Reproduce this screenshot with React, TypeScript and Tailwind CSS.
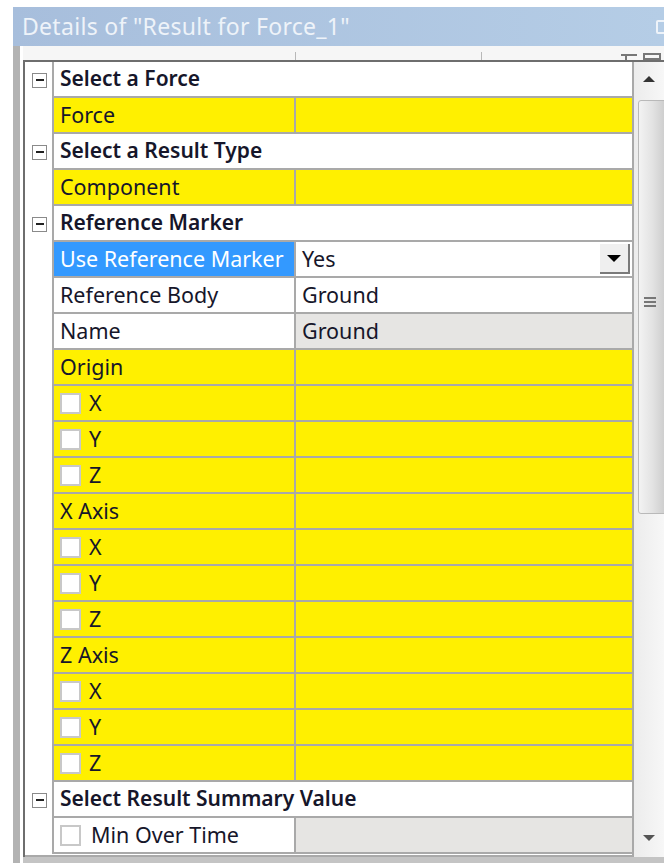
import type { ReactNode } from "react";

type Row =
  | { kind: "cat"; label: string }
  | {
      kind: "prop";
      label: string;
      value?: string;
      tone?: "yellow" | "white" | "selected";
      valueTone?: "yellow" | "white" | "gray";
      check?: boolean;
      dropdown?: boolean;
    };

const rows: Row[] = [
  { kind: "cat", label: "Select a Force" },
  { kind: "prop", label: "Force", tone: "yellow" },
  { kind: "cat", label: "Select a Result Type" },
  { kind: "prop", label: "Component", tone: "yellow" },
  { kind: "cat", label: "Reference Marker" },
  { kind: "prop", label: "Use Reference Marker", value: "Yes", tone: "selected", valueTone: "white", dropdown: true },
  { kind: "prop", label: "Reference Body", value: "Ground", tone: "white", valueTone: "white" },
  { kind: "prop", label: "Name", value: "Ground", tone: "white", valueTone: "gray" },
  { kind: "prop", label: "Origin", tone: "yellow" },
  { kind: "prop", label: "X", tone: "yellow", check: true },
  { kind: "prop", label: "Y", tone: "yellow", check: true },
  { kind: "prop", label: "Z", tone: "yellow", check: true },
  { kind: "prop", label: "X Axis", tone: "yellow" },
  { kind: "prop", label: "X", tone: "yellow", check: true },
  { kind: "prop", label: "Y", tone: "yellow", check: true },
  { kind: "prop", label: "Z", tone: "yellow", check: true },
  { kind: "prop", label: "Z Axis", tone: "yellow" },
  { kind: "prop", label: "X", tone: "yellow", check: true },
  { kind: "prop", label: "Y", tone: "yellow", check: true },
  { kind: "prop", label: "Z", tone: "yellow", check: true },
  { kind: "cat", label: "Select Result Summary Value" },
  { kind: "prop", label: "Min Over Time", tone: "white", valueTone: "gray", check: true },
];

const bg = {
  yellow: "bg-[#fff000]",
  white: "bg-white",
  selected: "bg-[#3399ff] text-white",
  gray: "bg-[#e6e5e3]",
} as const;

function Checkbox({ wide }: { wide?: boolean }) {
  return (
    <span
      className={`inline-block h-[21px] w-[21px] shrink-0 border-2 border-[#c8c8c8] bg-white ${
        wide ? "mr-[10px]" : "mr-[8px]"
      }`}
    />
  );
}

function Collapse() {
  return (
    <div className="flex h-[15px] w-[15px] items-center justify-center border border-[#8a8a8a] bg-white">
      <div className="h-[2px] w-[8px] bg-[#222]" />
    </div>
  );
}

function Cell({ className, children }: { className: string; children?: ReactNode }) {
  return <div className={`flex h-full items-center whitespace-nowrap px-[6px] ${className}`}>{children}</div>;
}

export default function App() {
  return (
    <div
      className="relative h-[863px] w-[664px] overflow-hidden bg-white text-[21.5px] text-[#16162a]"
      style={{ fontFamily: '"Noto Sans", "Open Sans", sans-serif' }}
    >
      {/* Title bar */}
      <div className="ml-[13px] mt-[7px] flex h-[39px] items-center bg-gradient-to-r from-[#a7bedc] to-[#b5cde6] pl-[9px] text-[23px] text-[#eef3f9]">
        <span className="tracking-[0.3px]">Details of "Result for Force_1"</span>
        <div className="ml-auto mr-[-4px] h-[14px] w-[12px] rounded-[2px] border-2 border-[#eef3f9]" />
      </div>

      <div className="ml-[13px] flex h-[817px] border-l-[7px] border-[#b3b3b3]">
        <div className="flex flex-1 flex-col pl-[3px]">
          {/* Column header strip */}
          <div className="relative h-[14px] bg-[#f6f6f6]">
            <div className="absolute left-[272px] top-[6px] h-[8px] w-px bg-[#b8b8b8]" />
            <div className="absolute left-[458px] top-[6px] h-[8px] w-px bg-[#b8b8b8]" />
            <div className="absolute left-[598px] top-[8px] h-[2px] w-[16px] bg-[#777]" />
            <div className="absolute left-[602px] top-[10px] h-[4px] w-[2px] bg-[#777]" />
            <div className="absolute left-[620px] top-[7px] h-[7px] w-[18px] border-2 border-[#777]" />
          </div>

          <div className="flex flex-1 border-l-2 border-t-2 border-[#6e6e6e]">
            {/* Grid */}
            <div className="flex w-[609px] flex-col border-r-2 border-[#a9a9a9]">
              {rows.map((r, i) => (
                <div key={i} className="flex h-[36px] shrink-0">
                  <div className="flex w-[29px] items-center justify-center border-r-2 border-[#a9a9a9] bg-white pl-[2px]">
                    {r.kind === "cat" && <Collapse />}
                  </div>
                  {r.kind === "cat" ? (
                    <div className="flex flex-1 items-center whitespace-nowrap border-b-2 border-[#a9a9a9] bg-white pl-[6px] text-[21px] font-semibold">
                      {r.label}
                    </div>
                  ) : (
                    <div className="flex flex-1 border-b-2 border-[#a9a9a9]">
                      <Cell className={`w-[242px] border-r-2 border-[#a9a9a9] ${bg[r.tone ?? "yellow"]}`}>
                        {r.check && <Checkbox wide={r.tone === "white"} />}
                        {r.label}
                      </Cell>
                      <Cell className={`flex-1 ${bg[r.valueTone ?? "yellow"]}`}>
                        {r.value}
                        {r.dropdown && (
                          <div className="ml-auto mr-[-4px] flex h-[30px] w-[30px] items-center justify-center border-b-2 border-r-2 border-[#7a7a7a] bg-[#efefef]">
                            <div className="h-0 w-0 border-x-[7px] border-t-[7px] border-x-transparent border-t-black" />
                          </div>
                        )}
                      </Cell>
                    </div>
                  )}
                </div>
              ))}
              <div className="flex-1 border-b-2 border-[#a9a9a9]" />
            </div>

            {/* Vertical scrollbar */}
            <div className="relative w-[30px] bg-gradient-to-r from-[#ececec] to-[#f7f7f7]">
              <div className="absolute left-[9px] top-[14px] h-0 w-0 border-x-[6px] border-b-[6px] border-x-transparent border-b-[#333]" />
              <div className="absolute left-[4px] top-[38px] h-[414px] w-[30px] rounded-[3px] border border-[#b9b9b9] bg-gradient-to-r from-[#f3f3f3] via-[#e2e2e2] to-[#c9c9c9]">
                <div className="absolute left-[5px] top-[196px] flex w-[12px] flex-col gap-[2px]">
                  <div className="h-[2px] bg-[#777]" />
                  <div className="h-[2px] bg-[#777]" />
                  <div className="h-[2px] bg-[#777]" />
                </div>
              </div>
              <div className="absolute left-[9px] top-[773px] h-0 w-0 border-x-[6px] border-t-[6px] border-x-transparent border-t-[#555]" />
            </div>
          </div>
          <div className="h-[6px] bg-[#c4c4c4]" />
        </div>
      </div>
    </div>
  );
}
